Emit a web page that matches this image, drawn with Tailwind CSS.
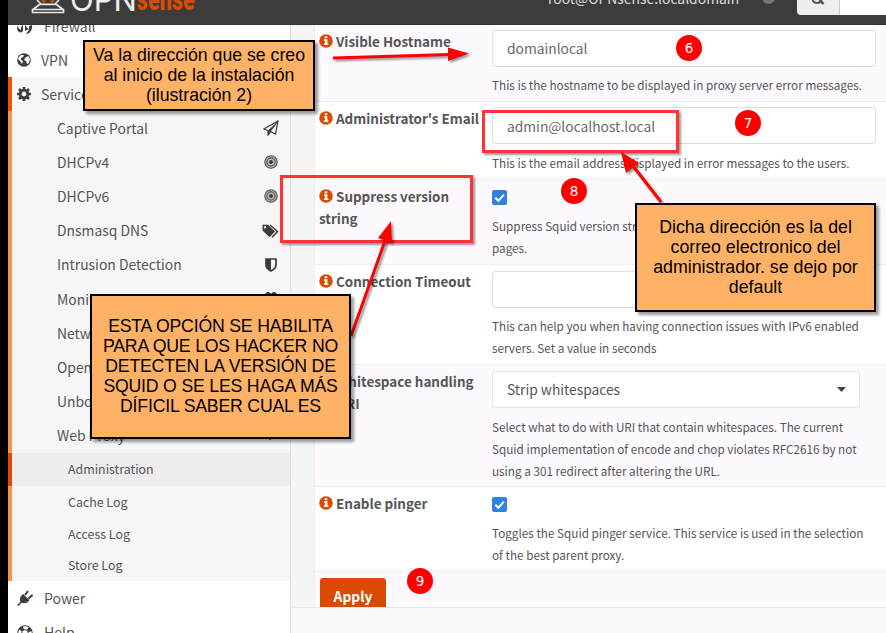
<!DOCTYPE html>
<html lang="es">
<head>
<meta charset="utf-8">
<title>OPNsense - Web Proxy</title>
<script src="https://cdn.jsdelivr.net/npm/@tailwindcss/browser@4"></script>
</head>
<body class="w-[886px] h-[633px] overflow-hidden bg-black">
<svg class="hidden">
  <symbol id="info" viewBox="0 0 14 14"><circle cx="7" cy="7" r="6.8" fill="#db4a02"/><path d="M5.8 2.3h2.5v1.9H5.8zM5 5.3h3.4v4.3h1v1.5H4.9V9.6h1V6.8H5z" fill="#fff"/></symbol>
  <symbol id="target" viewBox="0 0 14 14"><circle cx="7" cy="7" r="6.5" fill="#bbb"/><g fill="none" stroke="#555" stroke-width="1.1"><circle cx="7" cy="7" r="6.2"/><circle cx="7" cy="7" r="4.1"/></g><circle cx="7" cy="7" r="2" fill="#3c3c3b"/></symbol>
  <symbol id="check" viewBox="0 0 15 15"><rect width="15" height="15" rx="2" fill="#2f81e4"/><path d="M3.3 7.8l3 3 5.6-6.2" fill="none" stroke="#fff" stroke-width="2"/></symbol>
</svg>
<div class="relative flex flex-col w-[886px] h-[633px] pl-2 overflow-hidden font-['Noto_Sans_CJK_SC','Open_Sans',sans-serif] text-[#555]">
  <header class="h-[25px] shrink-0 bg-[#3c3c3b] border-b border-[#333] flex items-start overflow-hidden">
    <svg class="ml-[23px] w-[34px] h-[14px] shrink-0" viewBox="0 0 34 14"><path d="M1.500 9.500h31v3h-31zM2 9.500L8.500 4.500M32 9.500L25.500 4.500M8.500 4.300h17" fill="none" stroke="#e8e8e8" stroke-width="1.700"/><path d="M6 0l4 4M28 0l-4 4" stroke="#e8e8e8" stroke-width="1.500"/><path d="M11 0l3 2M23 0l-3 2" stroke="#db4a02" stroke-width="2.200"/></svg>
    <div class="ml-[5px] -mt-[18px] w-[67px] text-[31px] leading-[36px] font-['Inter'] text-[#eee] whitespace-nowrap">OPN</div>
    <div class="-mt-[17px] text-[31px] leading-[34px] w-[60px] font-['Roboto'] font-black text-[#db4a02] whitespace-nowrap"><span class="inline-block origin-left scale-x-[.7]">sense</span></div>
    <div class="ml-[351px] w-[193px] -mt-[12px] text-[13.9px] leading-[20px] text-[#ddd] whitespace-nowrap">root@OPNsense.localdomain</div>
    <div class="ml-[21px] -mt-[9px] size-[13px] rounded-full bg-[#777]"></div>
    <div class="ml-auto flex w-[89px] h-[15px] shrink-0">
      <div class="w-[43px] bg-[#eee] border-r border-[#ccc] rounded-bl-sm"><svg class="ml-[14px] w-[18px] h-[15px]" viewBox="0 0 18 15"><circle cx="6" cy="-1.500" r="4.500" fill="none" stroke="#555" stroke-width="2.200"/><path d="M8.500 0l4 4" stroke="#555" stroke-width="2.600"/></svg></div>
      <div class="flex-1 bg-white"></div>
    </div>
  </header>
  <div class="flex flex-1 min-h-0">
    <aside class="w-[283px] shrink-0 bg-white border-r border-[#ddd] overflow-hidden text-[14px] whitespace-nowrap">
      <div class="h-[18px] flex items-end overflow-hidden pl-[9px]">
        <svg class="w-4 h-[18px]" viewBox="0 0 16 18"><path d="M1 0C1 3 2 4 4 5V2.500L6 0v5.500C5 9 1 7.500 0 4zM8 0v6l4-2V1l3-1c1 4-2 9-6 9l3-4z" fill="#3c3c3b"/></svg>
        <span class="ml-[11px] h-[27px] leading-5">Firewall</span>
      </div>
      <div class="h-[34px] flex items-center pl-[9px]">
        <svg class="size-[14px]" viewBox="0 0 14 14"><circle cx="7" cy="7" r="6.800" fill="#3c3c3b"/><path d="M2 4l2-2 3 0-1 2-2 1v2l2 1-1 3-2-3-2-2zM8 5l3-2 2 3-1 4-2 1-1-3-2-1z" fill="#fff"/></svg>
        <span class="ml-[10px]">VPN</span>
      </div>
      <div class="h-[34px] bg-[#f6f6f6] border-l-4 border-[#e95500] flex items-center pl-[5px]">
        <svg class="size-[14px]" viewBox="0 0 14 14"><circle cx="7" cy="7" r="3.800" fill="none" stroke="#3c3c3b" stroke-width="2.800"/><path d="M7 0v3M7 11v3M0 7h3M11 7h3M2 2l2 2M10 10l2 2M12 2l-2 2M4 10l-2 2" stroke="#3c3c3b" stroke-width="2.600"/></svg>
        <span class="ml-[10px]">Services</span>
      </div>
      <div class="bg-[#f6f6f6] border-l-4 border-[#f79646] text-[13.9px]">
        <div class="h-[34.2px] flex items-center justify-between pl-[45px] pr-[11px]">Captive Portal<svg class="size-4" viewBox="0 0 16 16"><path d="M.8 9L15 1l-2.500 13-5-2.500zM7 11.500L15 1M5 10.500V15l2.500-3" fill="none" stroke="#3c3c3b" stroke-width="1.200"/><path d="M5 10.500L13 3l-7.500 11z" fill="#3c3c3b"/></svg></div>
        <div class="h-[34.2px] flex items-center justify-between pl-[45px] pr-3">DHCPv4<svg class="size-[14px]"><use href="#target"/></svg></div>
        <div class="h-[34.2px] flex items-center justify-between pl-[45px] pr-3">DHCPv6<svg class="size-[14px]"><use href="#target"/></svg></div>
        <div class="h-[34.2px] flex items-center justify-between pl-[45px] pr-[11px]">Dnsmasq DNS<svg class="w-[17px] h-[14px]" viewBox="0 0 17 14"><path fill-rule="evenodd" d="M.5.800h5.500l7 6.700-5.500 5.700L.5 6.500zM3 2a1.200 1.200 0 100 2.400A1.200 1.200 0 003 2z" fill="#3c3c3b"/><path d="M8 1l7.500 6.500-5.500 5.700" fill="none" stroke="#3c3c3b" stroke-width="1.500"/></svg></div>
        <div class="h-[34.2px] flex items-center justify-between pl-[45px] pr-[13px]">Intrusion Detection<svg class="w-3 h-[14px]" viewBox="0 0 12 14"><path d="M1 1h10v6c0 3-2 4.500-5 6-3-1.500-5-3-5-6z" fill="none" stroke="#3c3c3b" stroke-width="1.700"/><path d="M1 1h5v12C3 11.500 1 10 1 7z" fill="#3c3c3b"/></svg></div>
        <div class="h-[34.2px] flex items-center justify-between pl-[45px] pr-3">Monit<svg class="size-[14px]" viewBox="0 0 14 14"><path d="M7 13L1 7C-1 3 2 0 4 0S7 2 7 2 8 0 10 0 15 3 13 7z" fill="#3c3c3b"/></svg></div>
        <div class="h-[34.2px] flex items-center pl-[45px]">Network</div>
        <div class="h-[34.2px] flex items-center pl-[45px]">OpenDNS</div>
        <div class="h-[34.2px] flex items-center pl-[45px]">Unbound</div>
        <div class="h-[34.2px] flex items-center justify-between pl-[45px] pr-[15px]">Web Proxy<svg class="size-[10px]" viewBox="0 0 10 10"><path d="M9 0L5 9" stroke="#3c3c3b" stroke-width="1.500"/></svg></div>
      </div>
      <div class="h-[33px] bg-[#efebef] border-l-4 border-[#e34a00] flex items-center pl-14 text-[12.4px]">Administration</div>
      <div class="bg-[#f6f6f6] border-l-4 border-[#f79646] text-[12.4px] h-[95px]">
        <div class="h-8 flex items-center pl-14">Cache Log</div>
        <div class="h-8 flex items-center pl-14">Access Log</div>
        <div class="h-[31px] flex items-center pl-14">Store Log</div>
      </div>
      <div class="h-[35px] flex items-center pl-[9px]">
        <svg class="size-4" viewBox="0 0 16 16"><path d="M0 15l3.500-3C2 9 3.500 6 6 4l6.500 6c-2 3-5 4-8 2.800L1.500 16z" fill="#3c3c3b"/><path d="M8 5l3-4M11.500 8.500l4-3.500" stroke="#3c3c3b" stroke-width="2"/></svg>
        <span class="ml-[11px]">Power</span>
      </div>
      <div class="h-[34px] flex items-center pl-[9px]">
        <svg class="size-4" viewBox="0 0 16 16"><circle cx="8" cy="8" r="5.200" fill="none" stroke="#3c3c3b" stroke-width="5"/><circle cx="8" cy="8" r="5.200" fill="none" stroke="#fff" stroke-width="3" stroke-dasharray="4.500 3.670" stroke-dashoffset="2.200"/></svg>
        <span class="ml-[11px]">Help</span>
      </div>
    </aside>
    <main class="flex-1 min-w-0 flex flex-col bg-[#f5f5f5]">
      <div class="ml-[23px] h-[582px] overflow-hidden bg-white text-[11.73px] leading-[22px] whitespace-nowrap">
        <section class="flex h-[77px] bg-[#fdf9ff] border-b border-[#eee] border-l border-l-[#eee]">
          <div class="w-[177px] pl-[4px] pt-[5px] text-[13.45px] font-bold flex gap-[3px]"><svg class="size-[14px] mt-[4px]"><use href="#info"/></svg>Visible Hostname</div>
          <div class="pt-[5px]"><div class="w-[384px] h-[37px] rounded-[3px] border border-[#ddd] bg-white pl-[14px] text-[13.8px] leading-[35px] text-[#6a6a6a]">domainlocal</div><p class="mt-[7px]">This is the hostname to be displayed in proxy server error messages.</p></div>
        </section>
        <section class="flex h-[78px] border-b border-[#eee] border-l border-l-[#eee]">
          <div class="w-[177px] pl-[4px] pt-[5px] text-[13.45px] font-bold flex gap-[3px]"><svg class="size-[14px] mt-[4px]"><use href="#info"/></svg>Administrator's Email</div>
          <div class="pt-[5px]"><div class="w-[384px] h-[37px] rounded-[3px] border border-[#ddd] bg-white pl-[14px] text-[13.8px] leading-[36px] text-[#6a6a6a]">admin@localhost.local</div><p class="mt-[8px]">This is the email address displayed in error messages to the users.</p></div>
        </section>
        <section class="flex h-[85px] bg-[#fdf9ff] border-b border-[#eee] border-l border-l-[#eee]">
          <div class="w-[177px] pl-[4px] pt-[5px] text-[13.45px] font-bold"><div class="flex gap-[3px]"><svg class="size-[14px] mt-[4px]"><use href="#info"/></svg>Suppress version</div>string</div>
          <div class="pt-[10px]"><svg class="size-[15px]"><use href="#check"/></svg><p class="mt-[10px]">Suppress Squid version string<br>pages.</p></div>
        </section>
        <section class="flex h-[100px] border-b border-[#eee] border-l border-l-[#eee]">
          <div class="w-[177px] pl-[4px] pt-[5px] text-[13.45px] font-bold flex gap-[3px]"><svg class="size-[14px] mt-[4px]"><use href="#info"/></svg>Connection Timeout</div>
          <div class="pt-[6px]"><div class="w-[384px] h-[37px] rounded-[3px] border border-[#ddd] bg-white"></div><p class="mt-[7px]">This can help you when having connection issues with IPv6 enabled<br>servers. Set a value in seconds</p></div>
        </section>
        <section class="flex h-[122px] bg-[#fdf9ff] border-b border-[#eee] border-l border-l-[#eee]">
          <div class="w-[177px] pl-[4px] pt-[5px] text-[13.45px] font-bold"><div class="flex gap-[3px]"><svg class="size-[14px] mt-[4px]"><use href="#info"/></svg>Whitespace handling</div><span class="ml-[17px]">URI</span></div>
          <div class="pt-[6px]"><div class="w-[368px] h-[37px] rounded-[3px] border border-[#e5e5e5] bg-white pl-[14px] pr-[13px] text-[13.8px] leading-[35px] flex justify-between items-center">Strip whitespaces<svg class="w-[9px] h-[5px]" viewBox="0 0 9 5"><path d="M0 0h9L4.500 5z" fill="#444"/></svg></div><p class="mt-[8px]">Select what to do with URI that contain whitespaces. The current<br>Squid implementation of encode and chop violates RFC2616 by not<br>using a 301 redirect after altering the URL.</p></div>
        </section>
        <section class="flex h-[85px] border-b border-[#eee] border-l border-l-[#eee]">
          <div class="w-[177px] pl-[4px] pt-[5px] text-[13.45px] font-bold flex gap-[3px]"><svg class="size-[14px] mt-[4px]"><use href="#info"/></svg>Enable pinger</div>
          <div class="pt-[10px]"><svg class="size-[15px]"><use href="#check"/></svg><p class="mt-[10px]">Toggles the Squid pinger service. This service is used in the selection<br>of the best parent proxy.</p></div>
        </section>
        <section class="h-[35px] bg-[#fdf9ff] border-l border-l-[#eee] pl-[5px] pt-[6px]">
          <div class="w-[66px] h-[38px] rounded-[3px] bg-[#db4a02] text-white text-[13.8px] font-bold leading-[37px] text-center">Apply</div>
        </section>
      </div>
      <footer class="flex-1 bg-[#fdf9ff] border-t border-[#e8e6e8]"></footer>
    </main>
  </div>

  <!-- Annotations above the page -->
  <div class="absolute left-[83px] top-[40px] w-[232px] h-[71px] border-2 border-black bg-[#ffb266] shadow-[3px_3px_3px_rgba(0,0,0,.4)] font-['Liberation_Sans'] text-[17.7px] leading-[20px] text-black text-center pt-[3px] whitespace-nowrap">Va la dirección que se creo<br>al inicio de la instalación<br>(ilustración 2)</div>
  <div class="absolute left-[280px] top-[175px] w-[193px] h-[68px] border-3 border-[#f33] shadow-[2px_2px_2px_rgba(0,0,0,.4)]"></div>
  <div class="absolute left-[482px] top-[110px] w-[197px] h-[43px] border-3 border-[#f33] shadow-[2px_2px_2px_rgba(0,0,0,.4)]"></div>
  <svg class="absolute left-0 top-0 w-[886px] h-[633px] drop-shadow-[2px_2px_1px_rgba(0,0,0,.4)]" viewBox="0 0 886 633"><g stroke="#f00" stroke-width="3"><path d="M333 58l117-3.500M351 336l35-98M661 202l-28-36"/></g><path d="M448 47.500l21 6-21 7.500zM391 221l-13 17 14 5zM621 152l5 21 13-10z" fill="#f00"/></svg>
  <div class="absolute left-[90px] top-[294px] w-[261px] h-[145px] border-2 border-black bg-[#ffb266] shadow-[3px_3px_3px_rgba(0,0,0,.4)] font-['Liberation_Sans'] text-[17.7px] tracking-[-.2px] leading-[20px] text-black text-center pt-[20px] whitespace-nowrap">ESTA OPCIÓN SE HABILITA<br>PARA QUE LOS HACKER NO<br>DETECTEN LA VERSIÓN DE<br>SQUID O SE LES HAGA MÁS<br>DÍFICIL SABER CUAL ES</div>
  <div class="absolute left-[635px] top-[203px] w-[241px] h-[109px] border-2 border-black bg-[#ffb266] shadow-[3px_3px_3px_rgba(0,0,0,.4)] font-['Liberation_Sans'] text-[17.8px] leading-[20px] text-black text-center pt-[12px] whitespace-nowrap">Dicha dirección es la del<br>correo electronico del<br>administrador. se dejo por<br>default</div>
  <div class="absolute left-[676px] top-[35px] size-[26px] rounded-full bg-[#f00] text-white font-['DejaVu_Sans'] text-[13.5px] leading-[26px] text-center">6</div>
  <div class="absolute left-[735px] top-[110px] size-[26px] rounded-full bg-[#f00] text-white font-['DejaVu_Sans'] text-[13.5px] leading-[26px] text-center">7</div>
  <div class="absolute left-[561px] top-[178px] size-[26px] rounded-full bg-[#f00] text-white font-['DejaVu_Sans'] text-[13.5px] leading-[26px] text-center">8</div>
  <div class="absolute left-[407px] top-[568px] size-[26px] rounded-full bg-[#f00] text-white font-['DejaVu_Sans'] text-[13.5px] leading-[26px] text-center">9</div>
</div>
</body>
</html>
